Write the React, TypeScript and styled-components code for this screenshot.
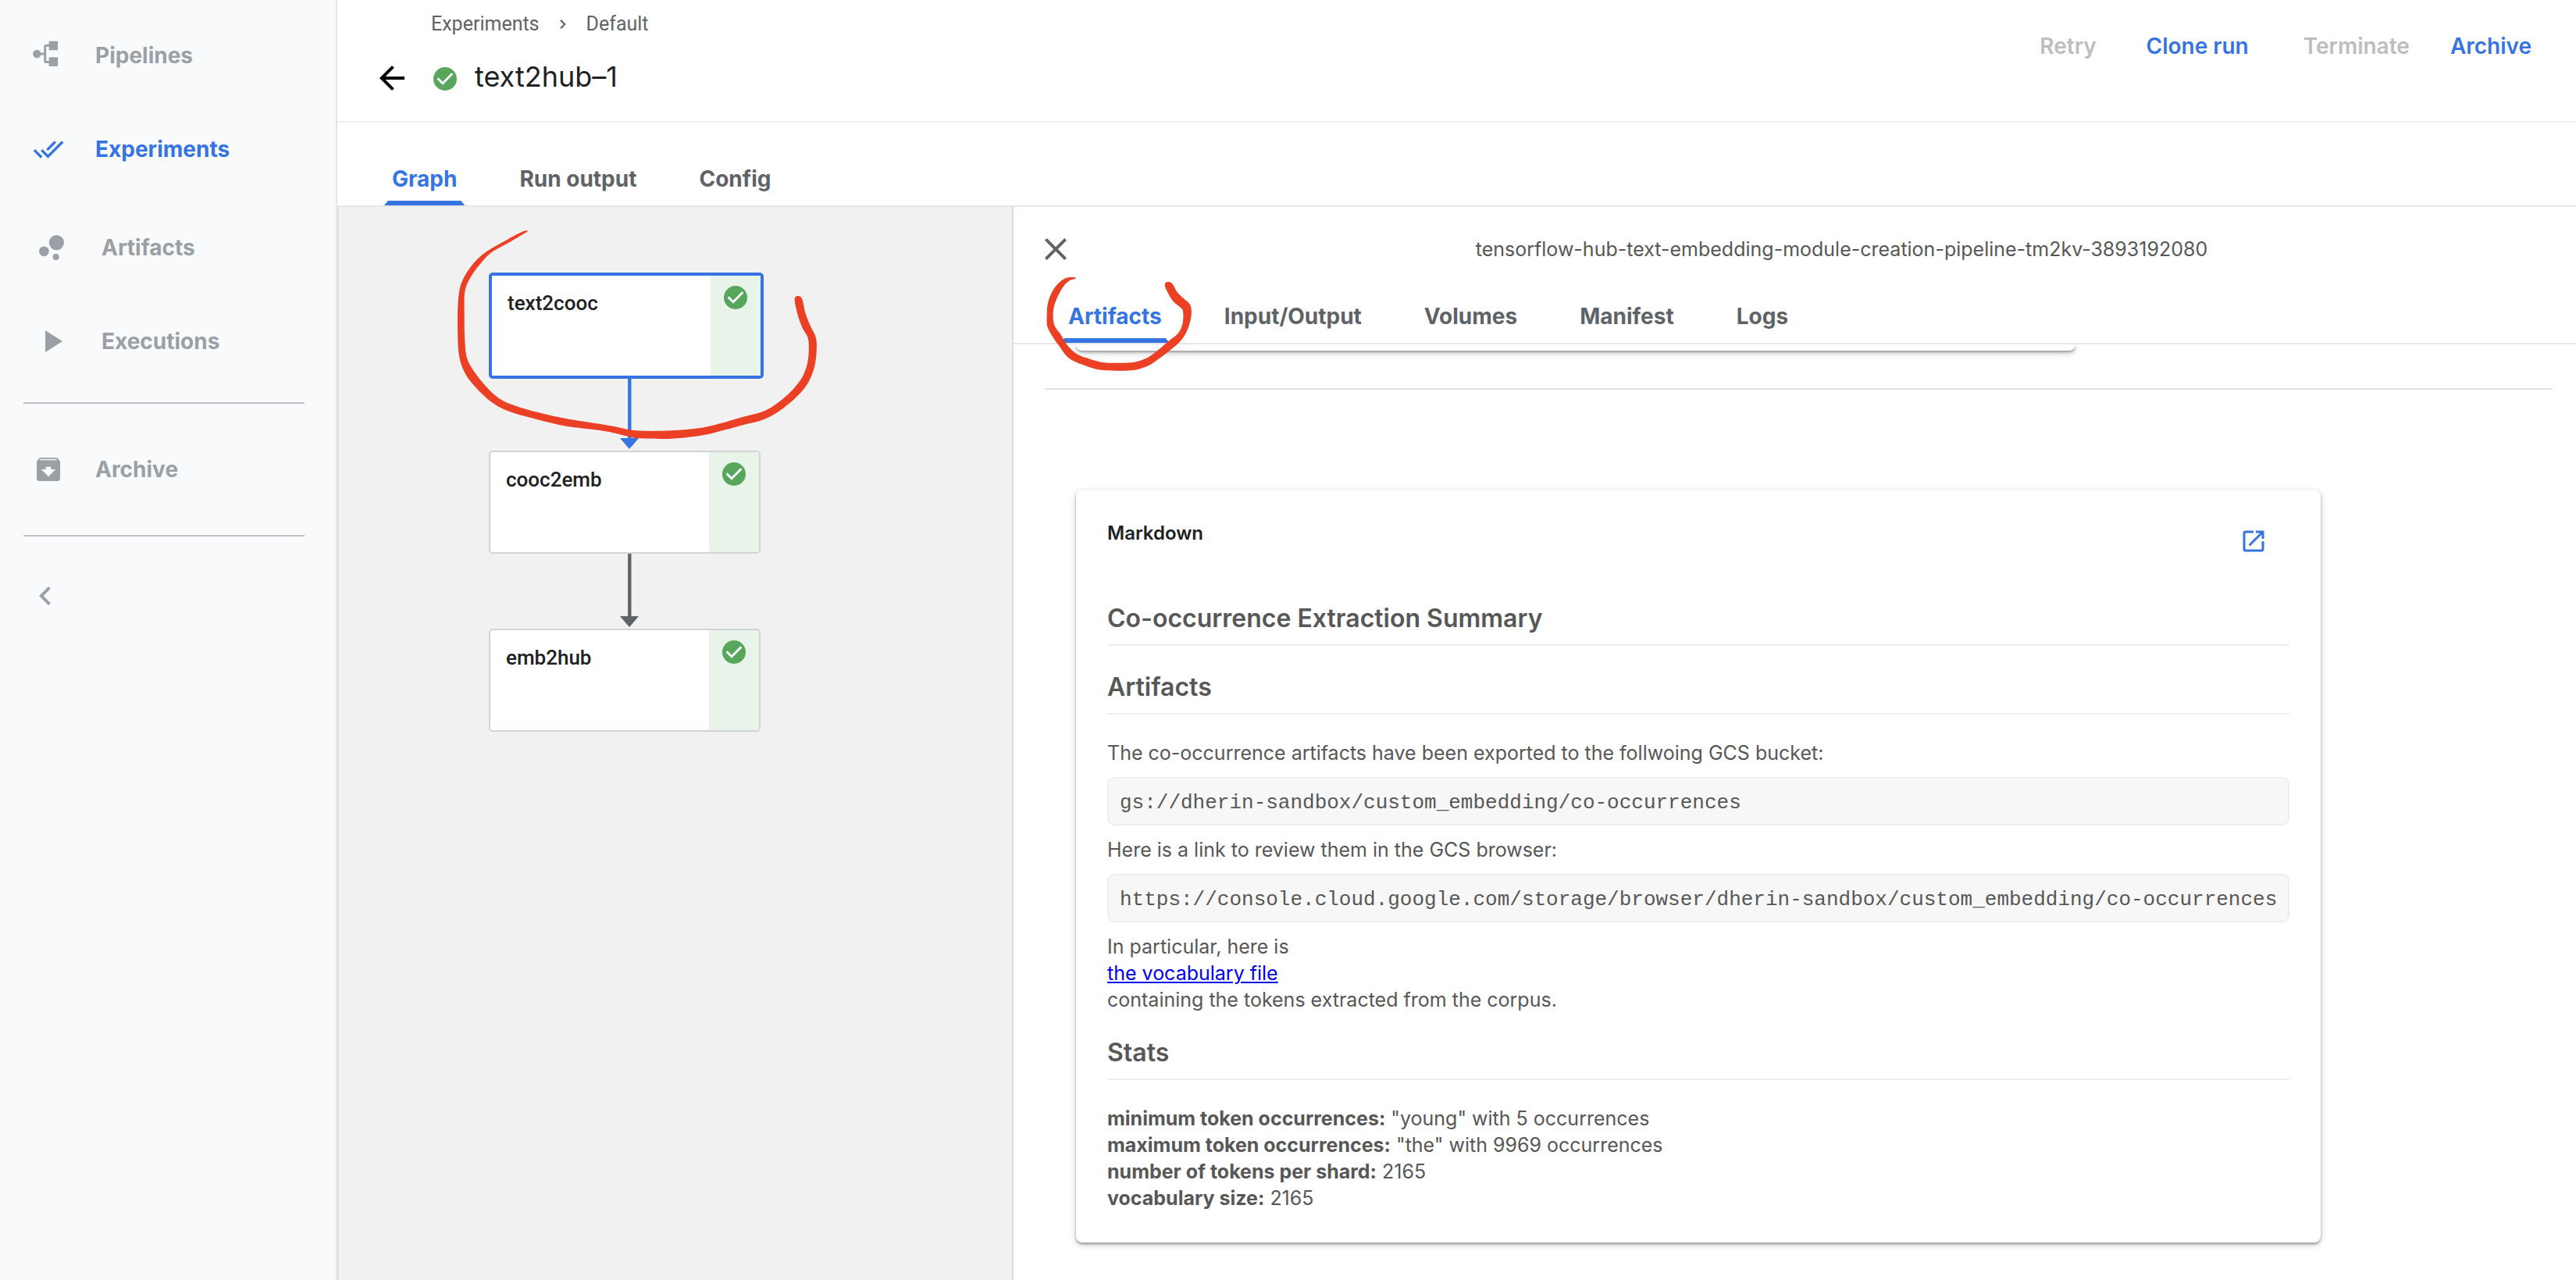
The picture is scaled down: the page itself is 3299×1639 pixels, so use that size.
import React from "react";
import styled, { createGlobalStyle, css } from "styled-components";

const blue = "#3574e2";
const grey = "#5f6368";
const navGrey = "#9aa0a6";
const body = "#575757";
const sans = `Inter, "Liberation Sans", sans-serif`;
const roboto = `Roboto, "Liberation Sans", sans-serif`;

const GlobalStyle = createGlobalStyle`
  *, *::before, *::after { box-sizing: border-box; }
  body { margin: 0; background: #fff; font-family: ${sans}; }
  button { margin: 0; padding: 0; border: 0; background: none; font: inherit; color: inherit; cursor: pointer; }
  h1, h2, h3, p, pre, ul, ol { margin: 0; padding: 0; list-style: none; }
  svg { display: block; flex: none; }
`;

const Shell = styled.div`
  display: flex;
  min-height: 100vh;
`;

/* ---------- side navigation ---------- */

const SideNav = styled.nav`
  flex: none;
  width: 432px;
  padding: 11px 40px 0 30px;
  background: #f9fafc;
  border-right: 2px solid #e6e6ea;
`;

const NavGroup = styled.div<{ $top?: number; $bottom?: number }>`
  padding-top: ${(p) => p.$top ?? 0}px;
  padding-bottom: ${(p) => p.$bottom ?? 0}px;
`;

const NavLink = styled.a<{ $active?: boolean; $nested?: boolean }>`
  display: flex;
  align-items: center;
  gap: ${(p) => (p.$nested ? 44 : 40)}px;
  height: 120px;
  padding-left: ${(p) => (p.$nested ? 16 : 12)}px;
  color: ${(p) => (p.$active ? blue : navGrey)};
  font-size: 28px;
  line-height: 36px;
  font-weight: 700;
  text-decoration: none;
`;

const IconSlot = styled.span`
  display: flex;
  flex: none;
  align-items: center;
  justify-content: center;
  width: 40px;
`;

const NavRule = styled.hr`
  height: 2px;
  margin: 0;
  border: 0;
  background: #bdc1c6;
`;

const CollapseButton = styled.button`
  margin: 52px 0 0 4px;
  color: ${navGrey};
`;

/* ---------- page header ---------- */

const Main = styled.main`
  display: flex;
  flex: 1;
  flex-direction: column;
  min-width: 0;
`;

const Header = styled.header`
  display: flex;
  justify-content: space-between;
  height: 157px;
  padding: 16px 41px 0 46px;
  border-bottom: 2px solid #eee;
`;

const Crumbs = styled.ol`
  display: flex;
  align-items: center;
  gap: 26px;
  padding-left: 74px;
  color: ${grey};
  font-family: ${roboto};
  font-size: 25px;
  line-height: 30px;

  a { color: inherit; text-decoration: none; }
`;

const TitleRow = styled.div`
  display: flex;
  align-items: flex-start;
  margin-top: 30px;
`;

const BackButton = styled.button`
  margin-right: 26px;
  color: #000;
`;

const TitleStatus = styled.span`
  padding: 7px 20px 7px 0;
`;

const Title = styled.h1`
  color: #202124;
  font-size: 36px;
  line-height: 44px;
  font-weight: 400;
`;

const Actions = styled.div`
  display: flex;
  align-items: flex-start;
  gap: 38px;
  padding-top: 7px;
`;

const ActionPair = styled.div`
  display: flex;
  gap: 20px;
`;

const ActionButton = styled.button`
  height: 72px;
  min-width: 128px;
  padding: 0 16px;
  color: ${blue};
  font-size: 28px;
  font-weight: 600;

  &:disabled { color: #bdbdbd; cursor: default; }
`;

/* ---------- tabs ---------- */

const TabBar = styled.div<{ $top: number }>`
  display: flex;
  flex: none;
  gap: 60px;
  padding: ${(p) => p.$top}px 0 0 60px;
  border-bottom: 2px solid #e6e6e6;
`;

const Tab = styled.button<{ $active?: boolean }>`
  position: relative;
  height: 68px;
  padding: 0 10px;
  color: ${(p) => (p.$active ? blue : grey)};
  font-size: 28px;
  font-weight: 700;

  ${(p) =>
    p.$active &&
    css`
      &::after {
        content: "";
        position: absolute;
        right: 0;
        bottom: 0;
        left: 0;
        height: 6px;
        background: ${blue};
        clip-path: polygon(5px 0, calc(100% - 5px) 0, 100% 100%, 0 100%);
      }
    `}
`;

/* ---------- graph ---------- */

const Split = styled.div`
  display: flex;
  flex: 1;
`;

const GraphPane = styled.section`
  position: relative;
  flex: none;
  width: 864px;
  padding: 84px 0 0 192px;
  background: #f1f1f1;
  border-left: 2px solid #e0e0e0;
`;

const Step = styled.div`
  display: flex;
  flex-direction: column;
  align-items: flex-start;
  height: 228px;
`;

const Node = styled.button<{ $selected?: boolean }>`
  display: flex;
  flex: none;
  overflow: hidden;
  background: #fff;
  border: ${(p) => (p.$selected ? `4px solid ${blue}` : "2px solid #d4d4d4")};
  border-radius: 5px;
`;

const NodeLabel = styled.span`
  width: 280px;
  height: 128px;
  padding: 19px 20px;
  color: #202124;
  font-family: ${roboto};
  font-size: 26px;
  line-height: 32px;
  font-weight: 500;
  text-align: left;
`;

const NodeStatus = styled.span`
  display: flex;
  justify-content: center;
  width: 64px;
  height: 128px;
  padding-top: 10px;
  background: #e8f3e9;
`;

const EdgeBox = styled.div`
  flex: 1;
  margin-left: 168px;
`;

const Scribble = styled.svg`
  position: absolute;
  top: 0;
  left: 0;
  overflow: visible;
  pointer-events: none;
`;

/* ---------- details panel ---------- */

const Panel = styled.section`
  position: relative;
  display: flex;
  flex: 1;
  flex-direction: column;
  min-width: 0;
  border-left: 2px solid #ddd;
`;

const PanelHeader = styled.div`
  display: flex;
  align-items: center;
  gap: 42px;
  height: 106px;
  padding: 2px 0 0 30px;
`;

const CloseButton = styled.button`
  color: ${grey};
`;

const PanelTitle = styled.h2`
  flex: 1;
  color: ${body};
  font-size: 25px;
  line-height: 34px;
  font-weight: 400;
  text-align: center;
`;

const PanelBody = styled.div`
  flex: 1;
  overflow: hidden;
  padding: 0 30px 48px 40px;
`;

const shadow = css`
  box-shadow: 0 2px 3px rgba(0, 0, 0, 0.3), 0 3px 9px rgba(0, 0, 0, 0.2);
`;

const PreviousCard = styled.div`
  width: 1280px;
  height: 8px;
  margin-left: 40px;
  border-radius: 0 0 8px 8px;
  ${shadow}
`;

const PanelRule = styled.hr`
  height: 2px;
  margin: 48px 0 128px;
  border: 0;
  background: #e0e0e0;
`;

const Card = styled.article`
  width: fit-content;
  margin-left: 40px;
  padding: 40px;
  background: #fff;
  border-radius: 8px;
  color: ${body};
  font-size: 25px;
  line-height: 34px;
  ${shadow}
`;

const CardHeader = styled.div`
  display: flex;
  justify-content: space-between;
  margin-bottom: 50px;
`;

const CardTitle = styled.h3`
  color: #202124;
  font-size: 24px;
  line-height: 32px;
  font-weight: 600;
`;

const OpenButton = styled.button`
  padding: 8px 28px;
  color: ${blue};
`;

const Heading = styled.h3`
  margin: 28px 0 32px;
  padding-bottom: 10px;
  border-bottom: 2px solid #eee;
  font-size: 32px;
  line-height: 46px;
  font-weight: 600;

  & + & { margin-top: -2px; }
`;

const Code = styled.pre`
  margin: 14px 0;
  padding: 14px 14px 10px;
  background: #f7f7f7;
  border: 2px solid #eee;
  border-radius: 9px;
  font-family: "Liberation Mono", monospace;
  font-size: 26px;
  line-height: 34px;
`;

const VocabLink = styled.a`
  display: table;
  color: #0000ee;
`;

const Stat = styled.li`
  strong { font-weight: 700; }
`;

/* ---------- drawings ---------- */

const Glyph = ({ d, size }: { d: string; size: number }) => (
  <svg width={size} height={size} viewBox="0 0 24 24" fill="currentColor" aria-hidden="true">
    <path d={d} />
  </svg>
);

const PipelineIcon = () => (
  <svg width="40" height="40" viewBox="0 0 40 40" fill="currentColor" aria-hidden="true">
    <circle cx="5.3" cy="18" r="5.2" />
    <rect x="20.7" y="1.7" width="11.4" height="11.6" />
    <rect x="20.7" y="22.3" width="11.4" height="11.6" />
    <path d="M22 7.3H17.2Q15.7 7.3 15.7 8.8V26.9Q15.7 28.4 17.2 28.4H22M9 18.1H15.7" fill="none" stroke="currentColor" strokeWidth="3" />
  </svg>
);

const SuccessIcon = () => (
  <svg width="36" height="36" viewBox="-18 -18 36 36" role="img" aria-label="Succeeded">
    <circle r="15" fill="#57a65b" />
    <path d="M-9.5 -0.8L-3 5.8L9.3 -6.8" fill="none" stroke="#fff" strokeWidth="2.8" />
  </svg>
);

const Edge = ({ color, height }: { color: string; height: number }) => (
  <EdgeBox>
    <svg width="24" height={height} viewBox={`0 0 24 ${height}`} aria-hidden="true">
      <path d={`M12.3 0V${height - 14}`} stroke={color} strokeWidth="4.4" />
      <path d={`M0 ${height - 16}H24L12 ${height - 2}Z`} fill={color} />
    </svg>
  </EdgeBox>
);

type Point = [number, number];

/* Closed smooth outline through the given points. */
const outline = (pts: Point[]) => {
  const n = pts.length;
  const at = (i: number) => pts[(i + n) % n];
  let d = `M${pts[0][0]} ${pts[0][1]}`;
  for (let i = 0; i < n; i++) {
    const [a, b, c, e] = [at(i - 1), at(i), at(i + 1), at(i + 2)];
    d += `C${b[0] + (c[0] - a[0]) / 6} ${b[1] + (c[1] - a[1]) / 6} ${c[0] - (e[0] - b[0]) / 6} ${c[1] - (e[1] - b[1]) / 6} ${c[0]} ${c[1]}`;
  }
  return d + "Z";
};

const nodeScribble: Point[] = [
  [318, 77], [300, 79], [240, 110], [150, 163], [95, 220], [62, 280], [51, 340], [48, 430], [53, 550], [75, 620],
  [115, 675], [175, 732], [240, 768], [330, 795], [450, 824], [570, 840], [640, 851], [710, 868], [740, 874],
  [870, 875], [990, 862], [1080, 840], [1150, 821], [1220, 803], [1280, 772], [1350, 715], [1395, 660], [1419, 600],
  [1427, 540], [1425, 488], [1405, 445], [1385, 395], [1372, 340], [1357, 327], [1343, 340], [1355, 400],
  [1373, 450], [1395, 492], [1396, 560], [1385, 610], [1362, 655], [1310, 712], [1235, 765], [1140, 793],
  [1060, 816], [980, 834], [870, 844], [735, 844], [650, 828], [570, 815], [450, 795], [330, 767], [250, 742],
  [200, 715], [155, 672], [110, 615], [84, 565], [76, 500], [74, 400], [76, 310], [97, 257], [132, 208],
  [178, 160], [250, 119], [304, 87],
];

const tabScribble: Point[] = [
  [228, 45], [195, 48], [165, 70], [140, 105], [125, 150], [122, 195], [124, 235], [145, 275], [170, 310],
  [195, 345], [225, 367], [270, 385], [320, 400], [390, 404], [455, 402], [505, 388], [550, 360], [600, 322],
  [640, 285], [665, 240], [677, 190], [672, 150], [640, 120], [620, 98], [604, 70], [588, 62], [575, 74],
  [590, 110], [610, 140], [640, 165], [646, 185], [643, 225], [625, 262], [590, 290], [540, 332], [500, 358],
  [455, 372], [390, 374], [330, 371], [275, 355], [235, 338], [200, 305], [175, 265], [152, 232], [146, 195],
  [150, 155], [168, 110], [190, 75], [212, 56], [231, 51],
];

const icons = {
  doneAll: "M18 7l-1.41-1.41-6.34 6.34 1.41 1.41L18 7zm4.24-1.41L11.66 16.17 7.48 12l-1.41 1.41L11.66 19l12-12-1.42-1.41zM.41 13.41L6 19l1.41-1.41L1.83 12 .41 13.41z",
  bubbles: "M4 14.4a3.2 3.2 0 1 0 6.4 0a3.2 3.2 0 1 0-6.4 0zM12.8 18a2 2 0 1 0 4 0a2 2 0 1 0-4 0zM10.4 8.8a4.8 4.8 0 1 0 9.6 0a4.8 4.8 0 1 0-9.6 0z",
  play: "M8 5v14l11-7z",
  archive: "M20.54 5.23l-1.39-1.68C18.88 3.21 18.47 3 18 3H6c-.47 0-.88.21-1.16.55L3.46 5.23C3.17 5.57 3 6.02 3 6.5V19c0 1.1.9 2 2 2h14c1.1 0 2-.9 2-2V6.5c0-.48-.17-.93-.46-1.27zM12 17.5L6.5 12H10v-2h4v2h3.5L12 17.5zM5.12 5l.81-1h12l.94 1H5.12z",
  chevronLeft: "M15.41 7.41L14 6l-6 6 6 6 1.41-1.41L10.83 12z",
  back: "M20 11H7.83l5.59-5.59L12 4l-8 8 8 8 1.41-1.41L7.83 13H20v-2z",
  close: "M19 6.41L17.59 5 12 10.59 6.41 5 5 6.41 10.59 12 5 17.59 6.41 19 12 13.41 17.59 19 19 17.59 13.41 12z",
  open: "M19 19H5V5h7V3H5c-1.11 0-2 .9-2 2v14c0 1.1.89 2 2 2h14c1.1 0 2-.9 2-2v-7h-2v7zM14 3v2h3.59l-9.83 9.83 1.41 1.41L19 6.41V10h2V3h-7z",
};

const steps = [
  { name: "text2cooc", selected: true, edge: { color: blue, height: 92 } },
  { name: "cooc2emb", edge: { color: grey, height: 96 } },
  { name: "emb2hub" },
];

const stats = [
  ["minimum token occurrences:", `"young" with 5 occurrences`],
  ["maximum token occurrences:", `"the" with 9969 occurrences`],
  ["number of tokens per shard:", "2165"],
  ["vocabulary size:", "2165"],
];

export default function App() {
  return (
    <Shell>
      <GlobalStyle />
      <SideNav>
        <NavGroup $bottom={6}>
          <NavLink href="#pipelines"><IconSlot><PipelineIcon /></IconSlot>Pipelines</NavLink>
          <NavLink href="#experiments" $active><IconSlot><Glyph d={icons.doneAll} size={40} /></IconSlot>Experiments</NavLink>
        </NavGroup>
        <NavGroup $bottom={18}>
          <NavLink href="#artifacts" $nested><IconSlot><Glyph d={icons.bubbles} size={48} /></IconSlot>Artifacts</NavLink>
          <NavLink href="#executions" $nested><IconSlot><Glyph d={icons.play} size={48} /></IconSlot>Executions</NavLink>
        </NavGroup>
        <NavRule />
        <NavGroup $top={24} $bottom={24}>
          <NavLink href="#archive"><IconSlot><Glyph d={icons.archive} size={40} /></IconSlot>Archive</NavLink>
        </NavGroup>
        <NavRule />
        <CollapseButton aria-label="Collapse navigation"><Glyph d={icons.chevronLeft} size={48} /></CollapseButton>
      </SideNav>

      <Main>
        <Header>
          <div>
            <Crumbs>
              <li><a href="#experiments">Experiments</a></li>
              <svg width="8" height="12" viewBox="0 0 8 12" fill="none" stroke={grey} strokeWidth="2.2" aria-hidden="true">
                <path d="M1 0.8L6.2 6L1 11.2" />
              </svg>
              <li><a href="#default">Default</a></li>
            </Crumbs>
            <TitleRow>
              <BackButton aria-label="Back"><Glyph d={icons.back} size={48} /></BackButton>
              <TitleStatus><SuccessIcon /></TitleStatus>
              <Title>text2hub–1</Title>
            </TitleRow>
          </div>
          <Actions>
            <ActionPair>
              <ActionButton disabled>Retry</ActionButton>
              <ActionButton>Clone run</ActionButton>
            </ActionPair>
            <ActionPair>
              <ActionButton disabled>Terminate</ActionButton>
              <ActionButton>Archive</ActionButton>
            </ActionPair>
          </Actions>
        </Header>

        <TabBar $top={38} role="tablist">
          <Tab role="tab" $active aria-selected>Graph</Tab>
          <Tab role="tab">Run output</Tab>
          <Tab role="tab">Config</Tab>
        </TabBar>

        <Split>
          <GraphPane>
            {steps.map((s) => (
              <Step key={s.name}>
                <Node $selected={s.selected}>
                  <NodeLabel>{s.name}</NodeLabel>
                  <NodeStatus><SuccessIcon /></NodeStatus>
                </Node>
                {s.edge && <Edge {...s.edge} />}
              </Step>
            ))}
            <Scribble width="862" height="400" viewBox="0 0 862 400" aria-hidden="true">
              <path d={outline(nodeScribble)} transform="translate(136 5) scale(0.33333)" fill="#ec4025" />
            </Scribble>
          </GraphPane>

          <Panel>
            <PanelHeader>
              <CloseButton aria-label="Close"><Glyph d={icons.close} size={48} /></CloseButton>
              <PanelTitle>tensorflow-hub-text-embedding-module-creation-pipeline-tm2kv-3893192080</PanelTitle>
            </PanelHeader>
            <TabBar $top={0} role="tablist">
              <Tab role="tab" $active aria-selected>Artifacts</Tab>
              <Tab role="tab">Input/Output</Tab>
              <Tab role="tab">Volumes</Tab>
              <Tab role="tab">Manifest</Tab>
              <Tab role="tab">Logs</Tab>
            </TabBar>
            <PanelBody>
              <PreviousCard />
              <PanelRule />
              <Card>
                <CardHeader>
                  <CardTitle>Markdown</CardTitle>
                  <OpenButton aria-label="Open in new window"><Glyph d={icons.open} size={36} /></OpenButton>
                </CardHeader>
                <Heading>Co-occurrence Extraction Summary</Heading>
                <Heading>Artifacts</Heading>
                <p>The co-occurrence artifacts have been exported to the follwoing GCS bucket:</p>
                <Code>gs://dherin-sandbox/custom_embedding/co-occurrences</Code>
                <p>Here is a link to review them in the GCS browser:</p>
                <Code>https://console.cloud.google.com/storage/browser/dherin-sandbox/custom_embedding/co-occurrences</Code>
                <p>In particular, here is</p>
                <VocabLink href="#vocabulary">the vocabulary file</VocabLink>
                <p>containing the tokens extracted from the corpus.</p>
                <Heading>Stats</Heading>
                <ul>
                  {stats.map(([label, value]) => (
                    <Stat key={label}><strong>{label}</strong> {value}</Stat>
                  ))}
                </ul>
              </Card>
            </PanelBody>
            <Scribble width="400" height="260" viewBox="0 0 400 260" aria-hidden="true">
              <path d={outline(tabScribble)} transform="translate(2 75) scale(0.33333)" fill="#ec4025" />
            </Scribble>
          </Panel>
        </Split>
      </Main>
    </Shell>
  );
}
